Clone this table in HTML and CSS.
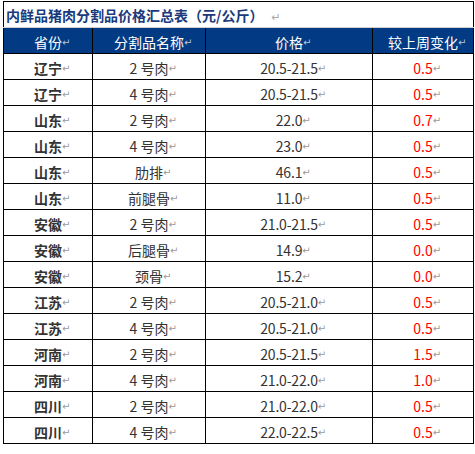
FILE: index.html
```html
<!DOCTYPE html>
<html lang="zh-CN">
<head>
<meta charset="utf-8">
<title>内鲜品猪肉分割品价格汇总表</title>
<link rel="stylesheet" href="styles.css">
</head>
<body>
<table class="price-table">
  <colgroup>
    <col class="c1"><col class="c2"><col class="c3"><col class="c4">
  </colgroup>
  <thead>
    <tr class="title-row">
      <td colspan="4" class="title">内鲜品猪肉分割品价格汇总表（元/公斤）<span class="tmk">↵</span></td>
    </tr>
    <tr class="head-row">
      <th><span class="t">省份<span class="mk">↵</span></span></th>
      <th><span class="t">分割品名称<span class="mk">↵</span></span></th>
      <th><span class="t">价格<span class="mk">↵</span></span></th>
      <th><span class="t">较上周变化<span class="mk">↵</span></span></th>
    </tr>
  </thead>
  <tbody>
    <tr><td class="prov"><span class="t">辽宁<span class="mk">↵</span></span></td><td><span class="t">2 号肉<span class="mk">↵</span></span></td><td class="num"><span class="t">20.5-21.5<span class="mk">↵</span></span></td><td class="chg"><span class="t">0.5<span class="mk">↵</span></span></td></tr>
    <tr><td class="prov"><span class="t">辽宁<span class="mk">↵</span></span></td><td><span class="t">4 号肉<span class="mk">↵</span></span></td><td class="num"><span class="t">20.5-21.5<span class="mk">↵</span></span></td><td class="chg"><span class="t">0.5<span class="mk">↵</span></span></td></tr>
    <tr><td class="prov"><span class="t">山东<span class="mk">↵</span></span></td><td><span class="t">2 号肉<span class="mk">↵</span></span></td><td class="num"><span class="t">22.0<span class="mk">↵</span></span></td><td class="chg"><span class="t">0.7<span class="mk">↵</span></span></td></tr>
    <tr><td class="prov"><span class="t">山东<span class="mk">↵</span></span></td><td><span class="t">4 号肉<span class="mk">↵</span></span></td><td class="num"><span class="t">23.0<span class="mk">↵</span></span></td><td class="chg"><span class="t">0.5<span class="mk">↵</span></span></td></tr>
    <tr><td class="prov"><span class="t">山东<span class="mk">↵</span></span></td><td><span class="t">肋排<span class="mk">↵</span></span></td><td class="num"><span class="t">46.1<span class="mk">↵</span></span></td><td class="chg"><span class="t">0.5<span class="mk">↵</span></span></td></tr>
    <tr><td class="prov"><span class="t">山东<span class="mk">↵</span></span></td><td><span class="t">前腿骨<span class="mk">↵</span></span></td><td class="num"><span class="t">11.0<span class="mk">↵</span></span></td><td class="chg"><span class="t">0.5<span class="mk">↵</span></span></td></tr>
    <tr><td class="prov"><span class="t">安徽<span class="mk">↵</span></span></td><td><span class="t">2 号肉<span class="mk">↵</span></span></td><td class="num"><span class="t">21.0-21.5<span class="mk">↵</span></span></td><td class="chg"><span class="t">0.5<span class="mk">↵</span></span></td></tr>
    <tr><td class="prov"><span class="t">安徽<span class="mk">↵</span></span></td><td><span class="t">后腿骨<span class="mk">↵</span></span></td><td class="num"><span class="t">14.9<span class="mk">↵</span></span></td><td class="chg"><span class="t">0.0<span class="mk">↵</span></span></td></tr>
    <tr><td class="prov"><span class="t">安徽<span class="mk">↵</span></span></td><td><span class="t">颈骨<span class="mk">↵</span></span></td><td class="num"><span class="t">15.2<span class="mk">↵</span></span></td><td class="chg"><span class="t">0.0<span class="mk">↵</span></span></td></tr>
    <tr><td class="prov"><span class="t">江苏<span class="mk">↵</span></span></td><td><span class="t">2 号肉<span class="mk">↵</span></span></td><td class="num"><span class="t">20.5-21.0<span class="mk">↵</span></span></td><td class="chg"><span class="t">0.5<span class="mk">↵</span></span></td></tr>
    <tr><td class="prov"><span class="t">江苏<span class="mk">↵</span></span></td><td><span class="t">4 号肉<span class="mk">↵</span></span></td><td class="num"><span class="t">20.5-21.0<span class="mk">↵</span></span></td><td class="chg"><span class="t">0.5<span class="mk">↵</span></span></td></tr>
    <tr><td class="prov"><span class="t">河南<span class="mk">↵</span></span></td><td><span class="t">2 号肉<span class="mk">↵</span></span></td><td class="num"><span class="t">20.5-21.5<span class="mk">↵</span></span></td><td class="chg"><span class="t">1.5<span class="mk">↵</span></span></td></tr>
    <tr><td class="prov"><span class="t">河南<span class="mk">↵</span></span></td><td><span class="t">4 号肉<span class="mk">↵</span></span></td><td class="num"><span class="t">21.0-22.0<span class="mk">↵</span></span></td><td class="chg"><span class="t">1.0<span class="mk">↵</span></span></td></tr>
    <tr><td class="prov"><span class="t">四川<span class="mk">↵</span></span></td><td><span class="t">2 号肉<span class="mk">↵</span></span></td><td class="num"><span class="t">21.0-22.0<span class="mk">↵</span></span></td><td class="chg"><span class="t">0.5<span class="mk">↵</span></span></td></tr>
    <tr><td class="prov"><span class="t">四川<span class="mk">↵</span></span></td><td><span class="t">4 号肉<span class="mk">↵</span></span></td><td class="num"><span class="t">22.0-22.5<span class="mk">↵</span></span></td><td class="chg"><span class="t">0.5<span class="mk">↵</span></span></td></tr>
  </tbody>
</table>
</body>
</html>
```
FILE: styles.css
```css
html, body {
  background: #ffffff;
}
body {
  margin: 1px 0 0 3px;
  font-family: "Noto Sans CJK SC", "Noto Sans", sans-serif;
  color: #333333;
}
.price-table {
  border-collapse: collapse;
  table-layout: fixed;
  width: 470px;
}
.c1 { width: 89px; }
.c2 { width: 113px; }
.c3 { width: 167px; }
.c4 { width: 101px; }

.price-table tr {
  height: 26px;
}
.price-table td,
.price-table th {
  border: 1px solid #000000;
  height: 26px;
  padding: 3px 0 0 0;
  box-sizing: border-box;
  text-align: center;
  vertical-align: middle;
  font-size: 14px;
  line-height: 18px;
  white-space: nowrap;
  position: relative;
}
.price-table tr > :last-child::after {
  content: "";
  position: absolute;
  right: -3px;
  top: 8px;
  width: 1px;
  height: 6px;
  background: #b0b0b0;
}
.title-row .title {
  text-align: left;
  padding: 3px 0 0 2px;
  border-bottom: 1px solid #cfcfcf;
  font-weight: bold;
  color: #1a3a7c;
  font-size: 14px;
}
.tmk {
  font-family: "DejaVu Sans", sans-serif;
  font-weight: normal;
  color: #a8a8a8;
  font-size: 11px;
  margin-left: 8px;
}
.head-row th {
  background: #023a84;
  color: #ffffff;
  font-weight: normal;
  border-top: 1px solid #cfcfcf;
}
.t {
  display: inline-block;
  position: relative;
}
.mk {
  position: absolute;
  left: 100%;
  top: 1px;
  font-family: "DejaVu Sans", sans-serif;
  font-weight: normal;
  font-size: 10px;
  color: #9a9a9a;
}
.head-row .mk {
  color: #b8c4dc;
}
.prov {
  font-weight: bold;
}
.num {
  letter-spacing: -0.2px;
}
.chg {
  color: #ff0000;
}
```
